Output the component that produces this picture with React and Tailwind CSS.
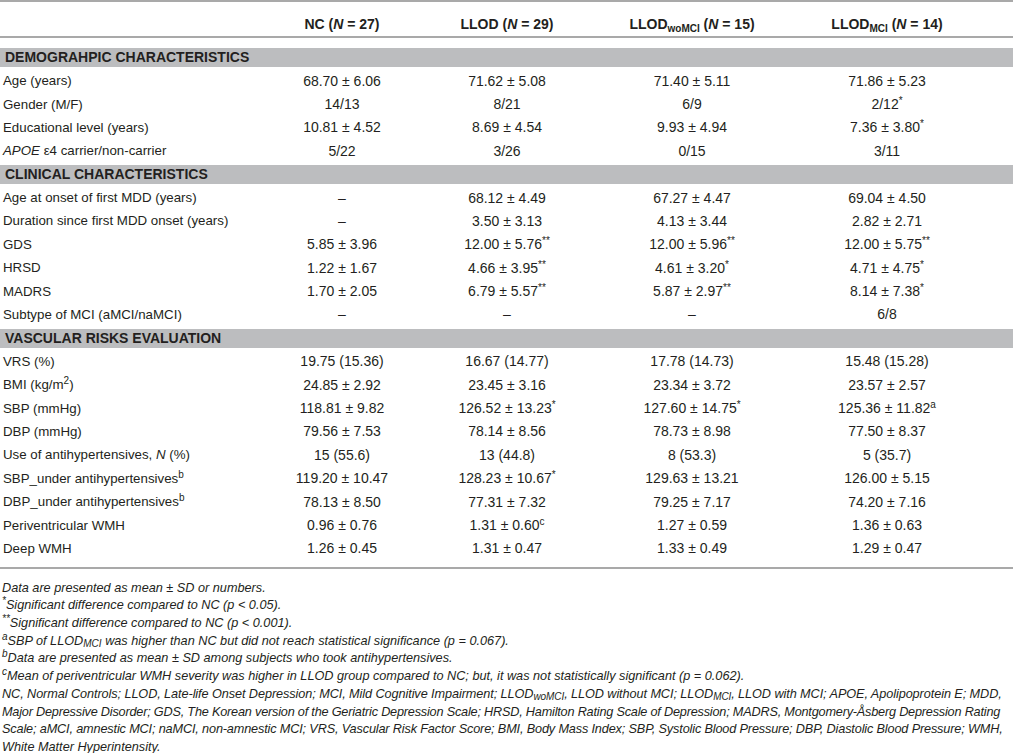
import React from 'react';

const S = ({ children }) => <sup className="text-[10px]">{children}</sup>;
const Sub = ({ children }) => <sub className="text-[10px]">{children}</sub>;
const pm = '\u00b1';

const rows = [
    { band: 'DEMOGRAHPIC CHARACTERISTICS' },
    ['Age (years)', `68.70 ${pm} 6.06`, `71.62 ${pm} 5.08`, `71.40 ${pm} 5.11`, `71.86 ${pm} 5.23`],
    ['Gender (M/F)', '14/13', '8/21', '6/9', <>2/12<S>*</S></>],
    ['Educational level (years)', `10.81 ${pm} 4.52`, `8.69 ${pm} 4.54`, `9.93 ${pm} 4.94`, <>7.36 {pm} 3.80<S>*</S></>],
    [<><i>APOE</i> ε4 carrier/non-carrier</>, '5/22', '3/26', '0/15', '3/11'],
    { band: 'CLINICAL CHARACTERISTICS' },
    ['Age at onset of first MDD (years)', '–', `68.12 ${pm} 4.49`, `67.27 ${pm} 4.47`, `69.04 ${pm} 4.50`],
    ['Duration since first MDD onset (years)', '–', `3.50 ${pm} 3.13`, `4.13 ${pm} 3.44`, `2.82 ${pm} 2.71`],
    ['GDS', `5.85 ${pm} 3.96`, <>12.00 {pm} 5.76<S>**</S></>, <>12.00 {pm} 5.96<S>**</S></>, <>12.00 {pm} 5.75<S>**</S></>],
    ['HRSD', `1.22 ${pm} 1.67`, <>4.66 {pm} 3.95<S>**</S></>, <>4.61 {pm} 3.20<S>*</S></>, <>4.71 {pm} 4.75<S>*</S></>],
    ['MADRS', `1.70 ${pm} 2.05`, <>6.79 {pm} 5.57<S>**</S></>, <>5.87 {pm} 2.97<S>**</S></>, <>8.14 {pm} 7.38<S>*</S></>],
    ['Subtype of MCI (aMCI/naMCI)', '–', '–', '–', '6/8'],
    { band: 'VASCULAR RISKS EVALUATION' },
    ['VRS (%)', '19.75 (15.36)', '16.67 (14.77)', '17.78 (14.73)', '15.48 (15.28)'],
    [<>BMI (kg/m<S>2</S>)</>, `24.85 ${pm} 2.92`, `23.45 ${pm} 3.16`, `23.34 ${pm} 3.72`, `23.57 ${pm} 2.57`],
    ['SBP (mmHg)', `118.81 ${pm} 9.82`, <>126.52 {pm} 13.23<S>*</S></>, <>127.60 {pm} 14.75<S>*</S></>, <>125.36 {pm} 11.82<S>a</S></>],
    ['DBP (mmHg)', `79.56 ${pm} 7.53`, `78.14 ${pm} 8.56`, `78.73 ${pm} 8.98`, `77.50 ${pm} 8.37`],
    [<>Use of antihypertensives, <i>N</i> (%)</>, '15 (55.6)', '13 (44.8)', '8 (53.3)', '5 (35.7)'],
    [<>SBP_under antihypertensives<S>b</S></>, `119.20 ${pm} 10.47`, <>128.23 {pm} 10.67<S>*</S></>, `129.63 ${pm} 13.21`, `126.00 ${pm} 5.15`],
    [<>DBP_under antihypertensives<S>b</S></>, `78.13 ${pm} 8.50`, `77.31 ${pm} 7.32`, `79.25 ${pm} 7.17`, `74.20 ${pm} 7.16`],
    ['Periventricular WMH', `0.96 ${pm} 0.76`, <>1.31 {pm} 0.60<S>c</S></>, `1.27 ${pm} 0.59`, `1.36 ${pm} 0.63`],
    ['Deep WMH', `1.26 ${pm} 0.45`, `1.31 ${pm} 0.47`, `1.33 ${pm} 0.49`, `1.29 ${pm} 0.47`],
];

const cols = 'grid grid-cols-[258px_168px_162px_208px_182px_1fr]';

const notes = [
    { t: <>Data are presented as mean {pm} SD or numbers.</> },
    { t: <><S>*</S>Significant difference compared to NC (p &lt; 0.05).</> },
    { t: <><S>**</S>Significant difference compared to NC (p &lt; 0.001).</> },
    { t: <><S>a</S>SBP of LLOD<Sub>MCI</Sub> was higher than NC but did not reach statistical significance (p = 0.067).</> },
    { t: <><S>b</S>Data are presented as mean {pm} SD among subjects who took antihypertensives.</> },
    { t: <><S>c</S>Mean of periventricular WMH severity was higher in LLOD group compared to NC; but, it was not statistically significant (p = 0.062).</> },
    { c: 'tracking-[-0.08px]', t: <>NC, Normal Controls; LLOD, Late-life Onset Depression; MCI, Mild Cognitive Impairment; LLOD<Sub>woMCI</Sub>, LLOD without MCI; LLOD<Sub>MCI</Sub>, LLOD with MCI; APOE, Apolipoprotein E; MDD,</> },
    { c: 'tracking-[-0.2px]', t: <>Major Depressive Disorder; GDS, The Korean version of the Geriatric Depression Scale; HRSD, Hamilton Rating Scale of Depression; MADRS, Montgomery-Åsberg Depression Rating</> },
    { c: 'tracking-[-0.15px]', t: <>Scale; aMCI, amnestic MCI; naMCI, non-amnestic MCI; VRS, Vascular Risk Factor Score; BMI, Body Mass Index; SBP, Systolic Blood Pressure; DBP, Diastolic Blood Pressure; WMH,</> },
    { t: <>White Matter Hyperintensity.</> },
];

export default function App() {
    return (
        <div className="w-[1013px] h-[753px] overflow-hidden bg-white text-[#231f20] font-['Liberation_Sans',Arial,sans-serif]">
            {/* Header */}
            <div className={`${cols} h-[38px] border-t-2 border-b-2 border-[#a9a9a9] pt-[11px] items-center text-[14px] font-bold`}>
                <div />
                <div className="text-center">NC (<i>N</i> = 27)</div>
                <div className="text-center">LLOD (<i>N</i> = 29)</div>
                <div className="text-center">LLOD<Sub>woMCI</Sub> (<i>N</i> = 15)</div>
                <div className="text-center">LLOD<Sub>MCI</Sub> (<i>N</i> = 14)</div>
                <div />
            </div>

            {/* Body */}
            <div className="pt-[8px] pb-[6px] border-b-2 border-[#a9a9a9] text-[14px]">
                {rows.map((r, i) =>
                    r.band ? (
                        <div key={i} className="h-[23.4px] flex items-center">
                            <div className="w-full h-[19px] bg-[#bcbdbf] pl-[5px] flex items-center font-bold">{r.band}</div>
                        </div>
                    ) : (
                        <div key={i} className={`${cols} h-[23.4px] items-center whitespace-nowrap`}>
                            <div className="pl-[3px] text-[13.3px]">{r[0]}</div>
                            {r.slice(1).map((c, j) => (
                                <div key={j} className="text-center">{c}</div>
                            ))}
                            <div />
                        </div>
                    )
                )}
            </div>

            {/* Footnotes */}
            <div className="pt-[11px] pl-[2px] text-[12.7px] italic leading-[17.7px]">
                {notes.map((n, i) => (
                    <div key={i} className={`whitespace-nowrap ${n.c || ''}`}>{n.t}</div>
                ))}
            </div>
        </div>
    );
}
